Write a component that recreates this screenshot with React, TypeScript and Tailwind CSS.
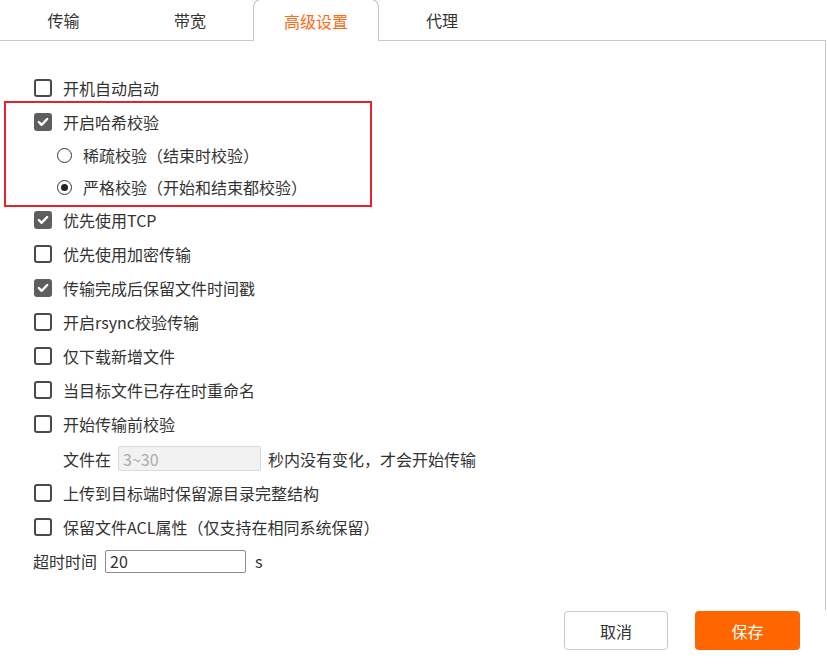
import React, { useState } from "react";

const FONT = { fontFamily: '"Noto Sans CJK SC", "Noto Sans", sans-serif' };

const tabs = ["传输", "带宽", "高级设置", "代理"];

const Checkbox: React.FC<{ checked: boolean }> = ({ checked }) =>
  checked ? (
    <span className="w-[18px] h-[18px] rounded-[3px] bg-[#5e5e5e] flex items-center justify-center shrink-0">
      <svg width="12" height="10" viewBox="0 0 12 10">
        <polyline
          points="1.8,5 4.6,7.8 10.2,2"
          fill="none"
          stroke="#fff"
          strokeWidth="2.4"
          strokeLinecap="round"
          strokeLinejoin="round"
        />
      </svg>
    </span>
  ) : (
    <span className="w-[18px] h-[18px] rounded-[3px] border-2 border-[#4a4a4a] bg-white shrink-0" />
  );

const Radio: React.FC<{ checked: boolean }> = ({ checked }) => (
  <span className="w-[15px] h-[15px] rounded-full border-[1.5px] border-[#333] flex items-center justify-center shrink-0">
    {checked && <span className="w-[7px] h-[7px] rounded-full bg-[#222]" />}
  </span>
);

const CheckRow: React.FC<{ label: string; checked?: boolean }> = ({
  label,
  checked = false,
}) => (
  <div className="h-[34px] flex items-center pl-[34px]">
    <Checkbox checked={checked} />
    <span className="ml-[11px] text-[16px] text-[#333]">{label}</span>
  </div>
);

const RadioRow: React.FC<{ label: string; checked?: boolean }> = ({
  label,
  checked = false,
}) => (
  <div className="h-[32px] flex items-center pl-[57px]">
    <Radio checked={checked} />
    <span className="ml-[11px] text-[16px] text-[#333]">{label}</span>
  </div>
);

export default function App() {
  const [active] = useState(2);

  return (
    <div className="w-[827px] h-[669px] bg-white overflow-hidden" style={FONT}>
      {/* Tabs */}
      <div className="flex h-[41px] border-b border-[#c8c8c8] w-[826px]">
        {tabs.map((t, i) => (
          <div
            key={t}
            className={
              i === active
                ? "w-[126px] h-[42px] -mt-px flex items-center justify-center text-[16px] text-[#ff6a13] bg-white border border-b-0 border-[#c4c4c4] rounded-t-[8px]"
                : `${i === 0 ? "w-[127px]" : "w-[126px]"} h-full flex items-center justify-center text-[16px] text-[#333]`
            }
          >
            {t}
          </div>
        ))}
      </div>

      {/* Panel */}
      <div className="w-[826px] h-[569px] border-r border-[#c8c8c8] pt-[30px] relative">
        <CheckRow label="开机自动启动" />

        <div className="relative">
          <div className="absolute left-[4px] w-[368px] -top-[4px] -bottom-[4px] border-2 border-[#e8222c] pointer-events-none" />
          <CheckRow label="开启哈希校验" checked />
          <RadioRow label="稀疏校验（结束时校验）" />
          <RadioRow label="严格校验（开始和结束都校验）" checked />
        </div>

        <CheckRow label="优先使用TCP" checked />
        <CheckRow label="优先使用加密传输" />
        <CheckRow label="传输完成后保留文件时间戳" checked />
        <CheckRow label="开启rsync校验传输" />
        <CheckRow label="仅下载新增文件" />
        <CheckRow label="当目标文件已存在时重命名" />
        <CheckRow label="开始传输前校验" />

        <div className="h-[35px] flex items-center pl-[63px] text-[16px] text-[#333]">
          <span>文件在</span>
          <input
            disabled
            placeholder="3~30"
            className="ml-[7px] w-[143px] h-[25px] bg-[#f2f2f2] border border-[#dadada] rounded-[2px] px-[4px] text-[16px] placeholder:text-[#aaa] outline-none"
            style={FONT}
          />
          <span className="ml-[7px]">秒内没有变化，才会开始传输</span>
        </div>

        <CheckRow label="上传到目标端时保留源目录完整结构" />
        <CheckRow label="保留文件ACL属性（仅支持在相同系统保留）" />

        <div className="h-[34px] flex items-center pl-[33px] text-[16px] text-[#333]">
          <span>超时时间</span>
          <input
            defaultValue="20"
            className="ml-[8px] w-[141px] h-[23px] border border-[#8c8c8c] rounded-[2px] px-[4px] text-[16px] text-[#333] outline-none"
            style={FONT}
          />
          <span className="ml-[9px]">s</span>
        </div>
      </div>

      {/* Footer */}
      <div className="flex justify-end gap-[27px] pr-[27px] pt-[1px]">
        <button className="w-[104px] h-[39px] rounded-[4px] border border-[#c8c8c8] bg-white text-[16px] text-[#333]">
          取消
        </button>
        <button className="w-[105px] h-[39px] rounded-[4px] bg-[#ff6600] text-[16px] text-white">
          保存
        </button>
      </div>
    </div>
  );
}
